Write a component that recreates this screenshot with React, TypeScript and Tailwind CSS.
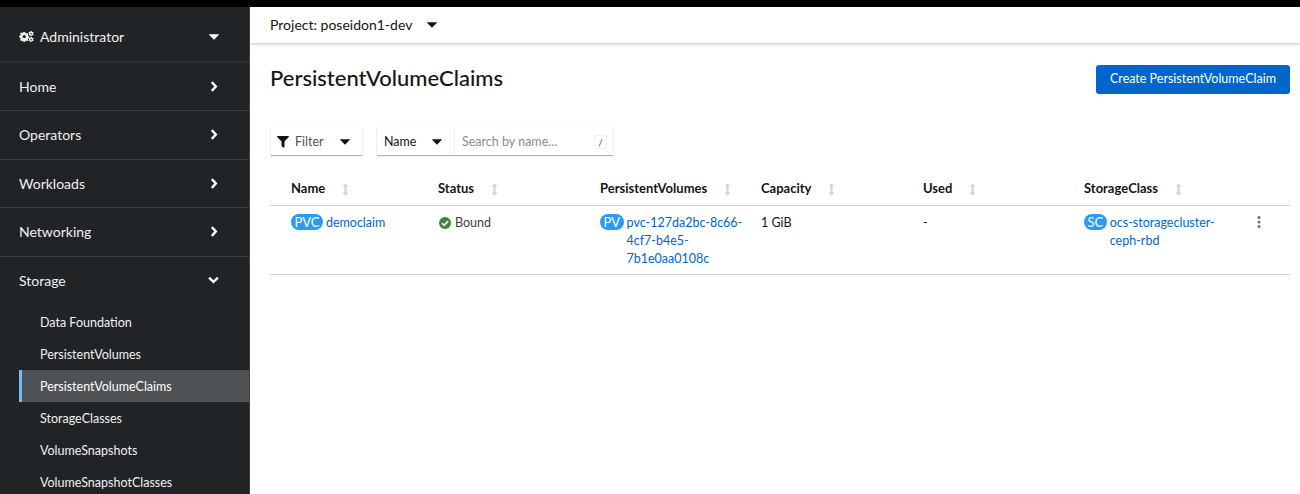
import React from "react";

const font = { fontFamily: '"Lato", "Liberation Sans", sans-serif' };

function Caret({ className = "" }: { className?: string }) {
  return (
    <svg viewBox="0 0 10 6" className={`w-[10px] h-[6px] ${className}`} fill="currentColor">
      <path d="M0.3 0.2h9.4c.3 0 .4.3.2.5L5.3 5.6c-.2.2-.4.2-.6 0L.1.7C-.1.5 0 .2.3.2z" />
    </svg>
  );
}

function ChevronRight() {
  return (
    <svg viewBox="0 0 8 12" className="w-[8px] h-[11px] text-white" fill="none" stroke="currentColor" strokeWidth="2.6">
      <path d="M1.6 1.2 6 6l-4.4 4.8" />
    </svg>
  );
}

function ChevronDown() {
  return (
    <svg viewBox="0 0 12 8" className="w-[11px] h-[8px] text-white" fill="none" stroke="currentColor" strokeWidth="2.6">
      <path d="M1.2 1.4 6 6l4.8-4.6" />
    </svg>
  );
}

function Cogs() {
  return (
    <svg viewBox="0 0 16 12" className="w-[15px] h-[11px] text-[#f0f0f0]" fill="currentColor">
      <path fillRule="evenodd" d="M4.6 1h1.8l.3 1.2 1 .5 1.1-.6 1.2 1.2-.6 1.1.4 1 1.2.4v1.6l-1.2.4-.4 1 .6 1.1-1.2 1.2-1.1-.6-1 .4-.3 1.1H4.6l-.3-1.1-1-.4-1.1.6L1 9.5l.6-1.1-.4-1L0 7V5.3l1.2-.4.4-1L1 2.8l1.2-1.2 1.1.6 1-.5zM5.5 4.3a1.8 1.8 0 1 0 0 3.6 1.8 1.8 0 0 0 0-3.6z" />
      <path fillRule="evenodd" d="M12.4 0h1.2l.2.8.6.3.8-.3.6 1-.6.6v.8l.6.6-.6 1-.8-.3-.6.3-.2.8h-1.2l-.2-.8-.6-.3-.8.3-.6-1 .6-.6v-.8l-.6-.6.6-1 .8.3.6-.3zM13 2.1a.9.9 0 1 0 0 1.8.9.9 0 0 0 0-1.8z" />
      <path fillRule="evenodd" d="M12.4 6.5h1.2l.2.8.6.3.8-.3.6 1-.6.6v.8l.6.6-.6 1-.8-.3-.6.3-.2.8h-1.2l-.2-.8-.6-.3-.8.3-.6-1 .6-.6v-.8l-.6-.6.6-1 .8.3.6-.3zM13 8.6a.9.9 0 1 0 0 1.8.9.9 0 0 0 0-1.8z" />
    </svg>
  );
}

function SortIcon() {
  return (
    <svg viewBox="0 0 8 14" className="w-[7px] h-[13px] text-[#d2d2d2]" fill="currentColor">
      <path d="M4 0 7.4 3.6H5.2v6.8h2.2L4 14 .6 10.4h2.2V3.6H.6z" />
    </svg>
  );
}

function NavRow({ label, open, last }: { label: string; open?: boolean; last?: boolean }) {
  return (
    <div className={`flex items-center justify-between pl-[19px] pr-[30px] text-[14px] text-[#f0f0f0] ${last ? "h-[49.25px] pb-[1px]" : "h-[48.5px] border-b border-[#3c3f42]"}`}>
      <span className="-mt-[1px]">{label}</span>
      <span className="w-[11px] flex justify-center -mt-[1px]">{open ? <ChevronDown /> : <ChevronRight />}</span>
    </div>
  );
}

function SubItem({ label, active }: { label: string; active?: boolean }) {
  return (
    <div className={`h-[32px] ml-[19px] pt-[2px] flex items-center text-[12.5px] ${active ? "bg-[#4f5255] border-l-[3px] border-[#73bcf7] pl-[18px] text-white" : "pl-[21px] text-[#f0f0f0]"}`}>
      {label}
    </div>
  );
}

function Badge({ label }: { label: string }) {
  return (
    <span className="shrink-0 h-[16px] px-[3.5px] rounded-full bg-[#2b9af3] text-white text-[13px] leading-[16px] flex items-center">
      {label}
    </span>
  );
}

function Th({ label, width }: { label: string; width: string }) {
  return (
    <div className={`${width} flex items-center gap-[17px] text-[13px] font-bold text-[#151515]`}>
      <span>{label}</span>
      <SortIcon />
    </div>
  );
}

export default function App() {
  return (
    <div style={font} className="w-[1300px] h-[494px] overflow-hidden bg-white flex flex-col">
      <div className="h-[7px] bg-black shrink-0" />
      <div className="flex flex-1 min-h-0">
        <aside className="w-[250px] shrink-0 bg-[#212427] border-r border-[#3c3f42] overflow-hidden">
          <div className="h-[55.75px] pt-[6px] flex items-center justify-between pl-[19px] pr-[30px] border-b-2 border-[#2c2f32] text-[14px] text-[#f0f0f0]">
            <span className="flex items-center gap-[6px]">
              <Cogs />
              Administrator
            </span>
            <span className="w-[11px] flex justify-center text-white">
              <Caret />
            </span>
          </div>
          <NavRow label="Home" />
          <NavRow label="Operators" />
          <NavRow label="Workloads" />
          <NavRow label="Networking" />
          <NavRow label="Storage" open last />
          <SubItem label="Data Foundation" />
          <SubItem label="PersistentVolumes" />
          <SubItem label="PersistentVolumeClaims" active />
          <SubItem label="StorageClasses" />
          <SubItem label="VolumeSnapshots" />
          <SubItem label="VolumeSnapshotClasses" />
        </aside>

        <main className="flex-1 min-w-0 flex flex-col">
          <div className="h-[36px] shrink-0 flex items-center pl-[20px] gap-[15px] bg-white shadow-[0_1px_3px_rgba(0,0,0,0.25)] text-[14px] text-[#151515]">
            <span className="-mt-[1px]">Project: poseidon1-dev</span>
            <Caret className="text-[#151515]" />
          </div>

          <div className="px-[20px] pr-[10px]">
            <div className="mt-[22px] h-[29px] flex items-center justify-between">
              <h1 className="text-[22px] font-medium text-[#151515] pb-[4px]">PersistentVolumeClaims</h1>
              <button className="w-[194px] h-[29px] bg-[#0066cc] rounded-[3px] text-white text-[12.5px]">
                Create PersistentVolumeClaim
              </button>
            </div>

            <div className="mt-[33px] flex items-stretch h-[28px] text-[12.5px]">
              <div className="w-[91px] ml-[1px] flex items-center pl-[6px] pt-[2px] shadow-[0_1px_1px_rgba(0,0,0,0.28),0_0_1px_rgba(0,0,0,0.1)] text-[#4f5255]">
                <svg viewBox="0 0 12 12" className="w-[12px] h-[12px] text-[#151515] mr-[6px]" fill="currentColor">
                  <path d="M.6 0h10.8c.5 0 .8.6.4 1L7.5 5.6V11c0 .6-.6.9-1 .6L4.9 10.4c-.2-.1-.4-.4-.4-.6V5.6L.2 1C-.2.6.1 0 .6 0z" />
                </svg>
                <span>Filter</span>
                <Caret className="ml-[16px] text-[#151515] w-[9px]" />
              </div>
              <div className="ml-[15px] w-[236px] flex shadow-[0_1px_1px_rgba(0,0,0,0.28),0_0_1px_rgba(0,0,0,0.1)]">
                <div className="w-[78px] flex items-center pl-[7px] pt-[2px] text-[#151515] border-r border-[#f0f0f0]">
                  <span>Name</span>
                  <Caret className="ml-[16px] text-[#151515] w-[9px]" />
                </div>
                <div className="flex-1 flex items-center justify-between pl-[7px] pr-[6px] pt-[2px] text-[#8a8d90]">
                  <span>Search by name...</span>
                  <span className="w-[13px] h-[14px] border border-[#f0f0f0] rounded-[2px] flex items-center justify-center text-[10px] text-[#4f5255]">/</span>
                </div>
              </div>
            </div>

            <div className="mt-[17px] h-[34px] pt-[1px] pl-[21px] flex items-center border-b border-[#d2d2d2]">
              <Th label="Name" width="w-[147px]" />
              <Th label="Status" width="w-[162px]" />
              <Th label="PersistentVolumes" width="w-[161px]" />
              <Th label="Capacity" width="w-[162px]" />
              <Th label="Used" width="w-[161px]" />
              <Th label="StorageClass" width="w-[150px]" />
            </div>

            <div className="h-[69px] pl-[21px] pt-[8px] flex items-start border-b border-[#d2d2d2] text-[12.5px] leading-[18px] text-[#151515]">
              <div className="w-[147px] flex items-start gap-[3px]">
                <Badge label="PVC" />
                <span className="text-[#0066cc]">democlaim</span>
              </div>
              <div className="w-[162px] flex items-center gap-[4px] pl-[1px] text-[#3c3f42]">
                <svg viewBox="0 0 12 12" className="w-[12px] h-[12px]">
                  <circle cx="6" cy="6" r="6" fill="#3e8635" />
                  <path d="M3 6.2 5.2 8.3 9.1 4.2" fill="none" stroke="#fff" strokeWidth="1.7" />
                </svg>
                <span>Bound</span>
              </div>
              <div className="w-[161px] flex items-start gap-[3px]">
                <Badge label="PV" />
                <span className="text-[#0066cc] whitespace-nowrap">
                  pvc-127da2bc-8c66-
                  <br />
                  4cf7-b4e5-
                  <br />
                  7b1e0aa0108c
                </span>
              </div>
              <div className="w-[162px]">1 GiB</div>
              <div className="w-[161px]">-</div>
              <div className="w-[172px] flex items-start gap-[3px]">
                <Badge label="SC" />
                <span className="text-[#0066cc] whitespace-nowrap">
                  ocs-storagecluster-
                  <br />
                  ceph-rbd
                </span>
              </div>
              <svg viewBox="0 0 4 12" className="w-[4px] h-[12px] mt-[2px] ml-[1px] text-[#6a6e73]" fill="currentColor">
                <circle cx="2" cy="1.5" r="1.5" />
                <circle cx="2" cy="6" r="1.5" />
                <circle cx="2" cy="10.5" r="1.5" />
              </svg>
            </div>
          </div>
        </main>
      </div>
    </div>
  );
}
